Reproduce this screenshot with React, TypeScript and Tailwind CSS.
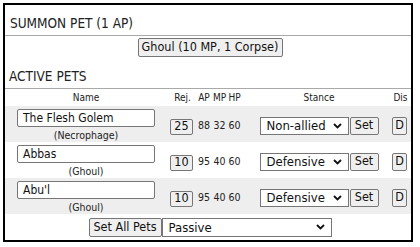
const pets = [
  { name: 'The Flesh Golem', kind: 'Necrophage', rej: 25, ap: 88, mp: 32, hp: 60, stance: 'Non-allied' },
  { name: 'Abbas', kind: 'Ghoul', rej: 10, ap: 95, mp: 40, hp: 60, stance: 'Defensive' },
  { name: "Abu'l", kind: 'Ghoul', rej: 10, ap: 95, mp: 40, hp: 60, stance: 'Defensive' },
]

function Chevron() {
  return (
    <svg width="9" height="6" viewBox="0 0 9 6" className="shrink-0">
      <path d="M1 1l3.5 3.5L8 1" fill="none" stroke="#111" strokeWidth="1.8" />
    </svg>
  )
}

function Btn({ children, className = '' }: { children: React.ReactNode; className?: string }) {
  return (
    <div
      className={`flex shrink-0 items-center justify-center whitespace-nowrap rounded-[2px] border border-[#767676] bg-[#efefef] text-[12.5px] leading-none text-[#111] ${className}`}
    >
      {children}
    </div>
  )
}

function FakeSelect({ value, className = '' }: { value: string; className?: string }) {
  return (
    <div
      className={`flex shrink-0 items-center justify-between border border-[#767676] bg-white pl-[6px] pr-[6px] text-[13px] leading-none text-[#111] ${className}`}
    >
      <span>{value}</span>
      <Chevron />
    </div>
  )
}

export default function App() {
  return (
    <div className="pl-[3px] pt-[3px] font-['DejaVu_Sans_Condensed','Liberation_Sans',sans-serif] text-[#222]">
      <div className="flex h-[239px] w-[410px] flex-col border-2 border-black bg-white">
        {/* summon */}
        <div className="flex h-[31px] shrink-0 items-end border-b border-[#a9a9a9] pb-[5px] pl-[5px] text-[13.5px] leading-none">
          SUMMON PET (1 AP)
        </div>
        <div className="flex justify-center pl-[4px] pt-[2px]">
          <Btn className="h-[19px] w-[145px]">Ghoul (10 MP, 1 Corpse)</Btn>
        </div>

        {/* active pets */}
        <div className="flex h-[32px] shrink-0 items-end border-b border-[#a9a9a9] pb-[5px] pl-[4px] text-[13.5px] leading-none">
          ACTIVE PETS
        </div>

        <div className="flex h-[17px] shrink-0 items-center whitespace-nowrap text-[10px] leading-none">
          <div className="flex w-[162px] flex-none justify-center">Name</div>
          <div className="flex w-[29px] flex-none justify-center pl-[2px]">Rej.</div>
          <div className="flex w-[16px] flex-none justify-center">AP</div>
          <div className="flex w-[15px] flex-none justify-center">MP</div>
          <div className="flex w-[15px] flex-none justify-center">HP</div>
          <div className="flex w-[150px] flex-none justify-center pl-[4px]">Stance</div>
          <div className="flex w-[17px] flex-none justify-center">Dis</div>
        </div>

        {pets.map((p, i) => (
          <div
            key={i}
            className={`flex h-[36px] shrink-0 items-center whitespace-nowrap ${i % 2 === 0 ? 'bg-[#eeeeee]' : 'bg-white'}`}
          >
            <div className="flex w-[162px] flex-none flex-col items-center self-start pt-[3px]">
              <div className="flex h-[18px] w-[138px] items-center rounded-[2px] border border-[#767676] bg-white pl-[5px] text-[12px] leading-none text-[#111]">
                {p.name}
              </div>
              <div className="mt-[3px] text-[10.5px] leading-none">({p.kind})</div>
            </div>
            <div className="flex w-[29px] flex-none justify-center pt-[5px]">
              <Btn className="h-[16px] w-[23px]">{p.rej}</Btn>
            </div>
            <div className="flex w-[16px] flex-none justify-center pt-[2px] text-[10.5px] leading-none">{p.ap}</div>
            <div className="flex w-[15px] flex-none justify-center pt-[2px] text-[10.5px] leading-none">{p.mp}</div>
            <div className="flex w-[15px] flex-none justify-center pt-[2px] text-[10.5px] leading-none">{p.hp}</div>
            <div className="flex w-[150px] flex-none items-center justify-center gap-[1px] pl-[4px] pt-[3px]">
              <FakeSelect value={p.stance} className="h-[18px] w-[89px]" />
              <Btn className="h-[18px] w-[29px]">Set</Btn>
            </div>
            <div className="flex w-[17px] flex-none justify-start pt-[3px]">
              <Btn className="h-[18px] w-[15px]">D</Btn>
            </div>
          </div>
        ))}

        <div className="flex flex-1 items-center justify-center pl-[4px]">
          <Btn className="h-[19px] w-[73px]">Set All Pets</Btn>
          <FakeSelect value="Passive" className="h-[19px] w-[170px]" />
        </div>
      </div>
    </div>
  )
}
